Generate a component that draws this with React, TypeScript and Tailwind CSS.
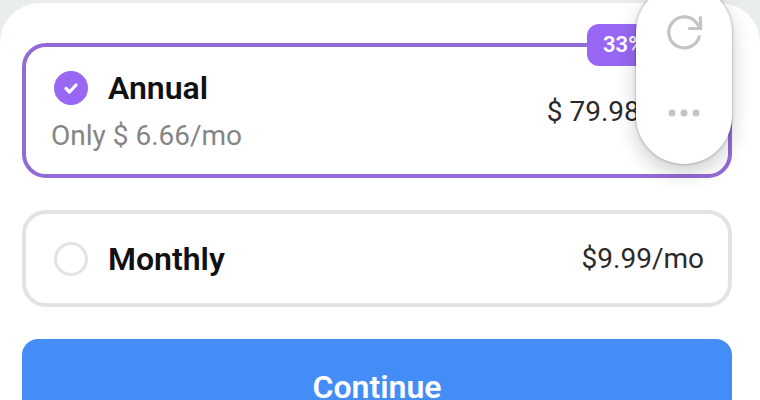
import { useState } from "react";

interface Plan {
  id: string;
  name: string;
  price: string;
  note?: string;
  badge?: string;
}

const plans: Plan[] = [
  { id: "annual", name: "Annual", price: "$ 79.98/year", note: "Only $ 6.66/mo", badge: "33% off" },
  { id: "monthly", name: "Monthly", price: "$9.99/mo" },
];

interface PlanCardProps {
  plan: Plan;
  selected: boolean;
  onSelect: () => void;
}

function PlanCard({ plan, selected, onSelect }: PlanCardProps) {
  return (
    <label
      htmlFor={plan.id}
      className={`relative flex min-h-[97px] cursor-pointer items-center justify-between rounded-3xl border-4 pr-6 pl-[25px] ${
        plan.note ? "pt-[17px] pb-[14px]" : "py-5"
      } ${selected ? "border-[#936bd6]" : "border-[#e3e3e3]"}`}
    >
      <div>
        <div className="flex h-12 items-center gap-5 pl-[3px]">
          <span className="grid size-[34px] place-items-center">
            <input
              id={plan.id}
              type="radio"
              name="plan"
              checked={selected}
              onChange={onSelect}
              className="col-start-1 row-start-1 size-[34px] appearance-none rounded-full border-3 border-[#e3e3e3] checked:border-[#9868f5] checked:bg-[#9868f5]"
            />
            {selected && (
              <svg viewBox="0 0 34 34" className="pointer-events-none z-10 col-start-1 row-start-1 size-[34px]" aria-hidden="true">
                <path d="M12 17.500l3.500 3.500 6.500-7" fill="none" stroke="#fff" strokeWidth="3.200" strokeLinecap="round" strokeLinejoin="round" />
              </svg>
            )}
          </span>
          <span className="text-[32px] leading-10 font-semibold text-[#111]">{plan.name}</span>
        </div>
        {plan.note && <p className="text-[28px] leading-[48px] text-[#858585]">{plan.note}</p>}
      </div>
      <span className="text-[28px] leading-10 text-[#2a2a2a]">{plan.price}</span>
      {plan.badge && (
        <span className="absolute -top-[23px] right-4 w-[125px] rounded-xl bg-[#9868f5] pl-4 text-[22px] leading-[42px] font-semibold text-white">
          {plan.badge}
        </span>
      )}
    </label>
  );
}

function FloatingMenu() {
  return (
    <div className="absolute -top-4 right-7 flex w-24 flex-col items-center gap-10 rounded-[48px] bg-white pt-7 pb-8 text-[#c4c4c4] shadow-[0_0_2px_1px_rgba(0,0,0,0.18),0_8px_20px_rgba(0,0,0,0.2)]">
      <button type="button" aria-label="Reload" className="size-10">
        <svg viewBox="0 0 40 40" className="size-10" fill="none" stroke="currentColor" strokeWidth="3.200" aria-hidden="true">
          <path d="M35.500 23.500A15.500 15.500 0 1 1 33 11.500L36 15.500" />
          <path d="M36.500 5.500V16.500H25.500" strokeLinecap="round" />
        </svg>
      </button>
      <button type="button" aria-label="More options" className="size-10">
        <svg viewBox="0 0 40 40" className="size-10" fill="currentColor" aria-hidden="true">
          <circle cx="8" cy="21" r="3.500" />
          <circle cx="20" cy="21" r="3.500" />
          <circle cx="32" cy="21" r="3.500" />
        </svg>
      </button>
    </div>
  );
}

export default function App() {
  const [selectedId, setSelectedId] = useState("annual");

  return (
    <div className="relative h-screen overflow-hidden bg-[#e9eeed] pt-[3px] font-[Roboto,sans-serif]">
      <form className="min-h-full rounded-t-[40px] bg-white pt-10 pr-7 pb-8 pl-[22px]" onSubmit={(e) => e.preventDefault()}>
        <div className="flex flex-col gap-8">
          {plans.map((plan) => (
            <PlanCard key={plan.id} plan={plan} selected={plan.id === selectedId} onSelect={() => setSelectedId(plan.id)} />
          ))}
          <button type="submit" className="rounded-2xl bg-[#448df7] py-7 text-[32px] leading-10 font-semibold text-white">
            Continue
          </button>
        </div>
      </form>
      <FloatingMenu />
    </div>
  );
}
